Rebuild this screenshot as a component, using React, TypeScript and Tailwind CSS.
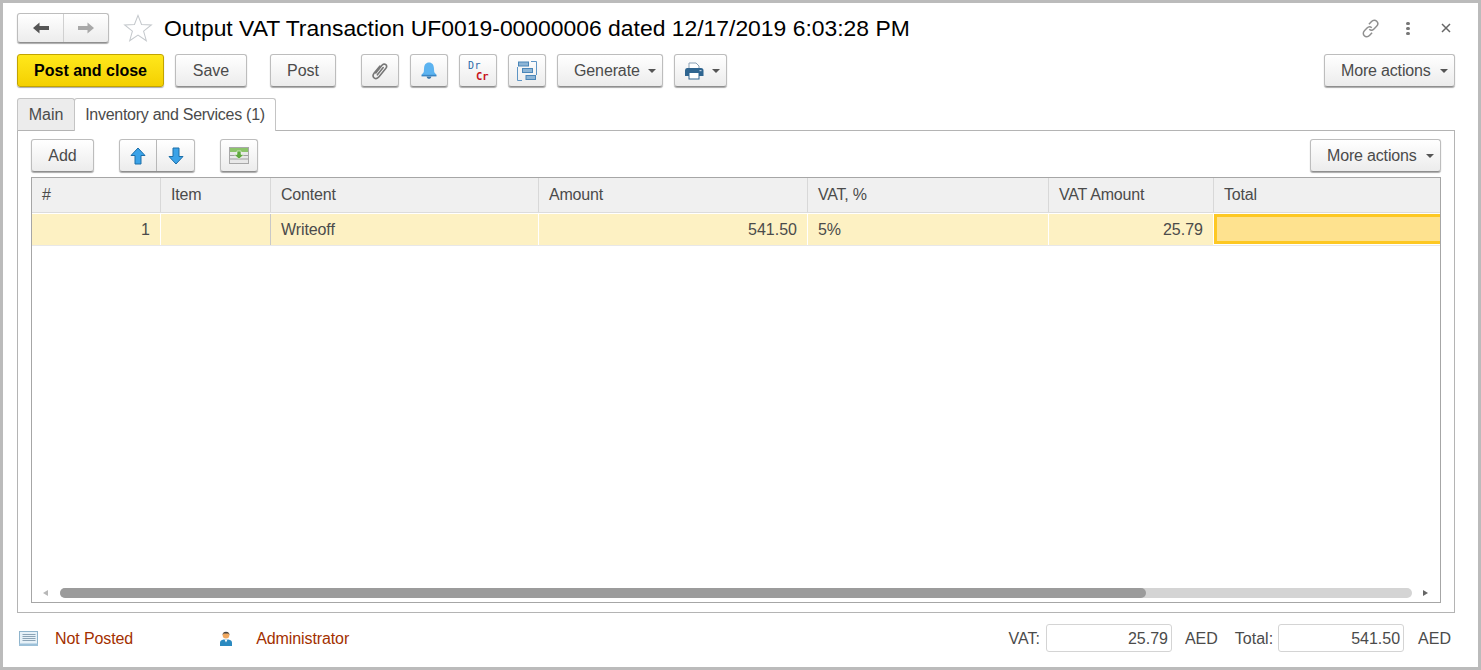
import React from "react";

const btn = "flex items-center justify-center h-[33px] rounded-[3px] border border-[#bdbdbd] border-b-[#8f8f8f] bg-gradient-to-b from-white to-[#ececec] shadow-[0_1px_1px_#aaa] text-[16px] text-[#4b4b4b]";
const drop = "flex items-center justify-start h-[33px] rounded-[3px] border border-[#bdbdbd] border-b-[#8f8f8f] bg-gradient-to-b from-white to-[#ececec] shadow-[0_1px_1px_#aaa] text-[16px] text-[#4b4b4b]";

const Caret = () => <span className="inline-block w-0 h-0 border-l-[4px] border-r-[4px] border-t-[4px] border-l-transparent border-r-transparent border-t-[#555]" />;

const Clip = () => (
  <svg width="18" height="18" viewBox="0 0 18 18" fill="none" stroke="#777" strokeWidth="1.6" strokeLinecap="round">
    <path d="M4.800 11 11 3.200c1.100-1.300 2.800-1.400 3.800-.5s1 2.500-.1 3.800L8 14.800c-1.500 1.800-3.600 2-4.900 1S1.900 12.800 3.200 11.100L8.800 4.200" />
    <path d="M6.400 12.800 12.200 5.600" />
  </svg>
);

const Bell = () => (
  <svg width="18" height="18" viewBox="0 0 18 18">
    <path d="M9 .6c3.200 0 4.700 2.300 4.900 5.200l.3 4c.1 1 1.500 1.900 2.300 3.200H1.500c.8-1.300 2.200-2.200 2.300-3.200l.3-4C4.300 2.900 5.800.6 9 .6z" fill="#5cb3f0" />
    <path d="M6.600 14.400h4.800c-.3 1.500-1.200 2.300-2.400 2.300s-2.100-.8-2.400-2.300z" fill="#3a76a8" />
    <rect x="1.500" y="12.800" width="15" height="1.600" fill="#3a86c4" />
  </svg>
);

const Flow = () => (
  <svg width="20" height="20" viewBox="0 0 20 20" fill="none">
    <path d="M.5 6v13.500H5M14 .5h5.500V14" stroke="#5f95c4" strokeWidth="1" />
    <rect x="1.500" y="1" width="10" height="4" fill="#8db5d6" stroke="#4a86b8" />
    <rect x="5.500" y="7.500" width="10" height="4" fill="#8db5d6" stroke="#4a86b8" />
    <rect x="9" y="14.500" width="9.500" height="4" fill="#8db5d6" stroke="#4a86b8" />
  </svg>
);

const Printer = () => (
  <svg width="20" height="18" viewBox="0 0 20 18">
    <path d="M5 1h7l3 3v4H5z" fill="#fff" stroke="#8aa0b4" />
    <path d="M3 6h14a2.500 2.500 0 0 1 2.500 2.500V14H1V8.500A2.500 2.500 0 0 1 3 6z" fill="#2f6590" />
    <rect x="5" y="10.500" width="10" height="6.500" fill="#fff" stroke="#2f6590" />
    <rect x="15.500" y="8" width="2" height="1.200" fill="#bcd" />
  </svg>
);

const Up = () => (
  <svg width="16" height="18" viewBox="0 0 16 18">
    <path d="M8 1 15 8.500H11V17H5V8.500H1z" fill="#3ba3e8" stroke="#1c6ea8" strokeLinejoin="round" />
  </svg>
);
const Down = () => (
  <svg width="16" height="18" viewBox="0 0 16 18">
    <path d="M8 17 15 9.500H11V1H5V9.500H1z" fill="#3ba3e8" stroke="#1c6ea8" strokeLinejoin="round" />
  </svg>
);

const Rows = () => (
  <svg width="20" height="17" viewBox="0 0 20 17">
    <rect x=".5" y=".5" width="19" height="16" fill="#e8e8e8" stroke="#a8a8a8" />
    <rect x="1" y="1" width="18" height="4" fill="#8cc46a" />
    <path d="M1 8.500h18M1 12h18" stroke="#a0a0a0" />
    <path d="M8 4h4v3.500h3L10 12 5 7.500h3z" fill="#5fa83e" stroke="#f0f8ea" strokeWidth=".6" />
  </svg>
);

const Star = () => (
  <svg width="30" height="28" viewBox="0 0 32 30" fill="none" stroke="#c4c8cc" strokeWidth="1.100">
    <path d="M16 1.500 19.800 11.300 30.300 11.700 22 18.300 24.900 28.600 16 22.700 7.100 28.600 10 18.300 1.700 11.700 12.200 11.300z" />
  </svg>
);

const Arrow = ({ right, color }: { right?: boolean; color: string }) => (
  <svg width="18" height="14" viewBox="0 0 18 14" style={{ transform: right ? "scaleX(-1)" : undefined }}>
    <path d="M1 7 7.500 1.500V5H17V9H7.500V12.500z" fill={color} />
  </svg>
);

const LinkIcon = () => (
  <svg width="21" height="21" viewBox="0 0 20 20" fill="none" stroke="#8f8f8f" strokeWidth="1.400">
    <path d="M8.500 6 11 3.300c1.400-1.500 3.600-1.500 4.900-.2s1.300 3.400-.1 4.800L13.300 10.500c-1.300 1.300-3.300 1.300-4.500.2" />
    <path d="M11.500 14 9 16.700c-1.400 1.500-3.600 1.500-4.900.2S2.800 13.500 4.200 12.100L6.700 9.500C8 8.200 10 8.200 11.200 9.300" />
  </svg>
);

const Memo = () => (
  <svg width="19" height="15" viewBox="0 0 19 15">
    <rect x=".5" y=".5" width="18" height="13.500" fill="#e6f1f8" stroke="#8fb4cc" />
    <rect x="0" y="12.500" width="19" height="2.500" fill="#9cc0d8" />
    <path d="M3.500 3.500h13M3.500 5.500h13M3.500 7.500h13M3.500 9.500h13" stroke="#8ba3b5" />
  </svg>
);

const Person = () => (
  <svg width="12" height="15" viewBox="0 0 12 15">
    <path d="M0 15v-3.500C0 9.800 1.500 9 3.500 8.500h5C10.500 9 12 9.800 12 11.500V15z" fill="#2b8ac0" />
    <path d="M4.500 8.500h3L6 11.500z" fill="#fff" />
    <circle cx="6" cy="4.200" r="3.300" fill="#f0a860" />
    <path d="M2.500 4.200a3.500 3.500 0 0 1 7 0L8.500 2.600h-5z" fill="#444" />
  </svg>
);

const cols = [
  { w: "w-[129px]", h: "#", v: "1", right: true, sep: "border-white" },
  { w: "w-[110px]", h: "Item", v: "", sep: "border-[#c8c8c8]" },
  { w: "w-[268px]", h: "Content", v: "Writeoff", sep: "border-white" },
  { w: "w-[269px]", h: "Amount", v: "541.50", right: true, sep: "border-white" },
  { w: "w-[241px]", h: "VAT, %", v: "5%", sep: "border-white" },
  { w: "w-[165px]", h: "VAT Amount", v: "25.79", right: true, sep: "border-white" },
];

export default function App() {
  return (
    <div className="w-[1481px] h-[670px] border-[3px] border-[#bbbbbb] bg-white text-[16px] text-[#4b4b4b] overflow-hidden" style={{ fontFamily: '"Liberation Sans", Arial, sans-serif' }}>
      <div className="flex items-center h-[30px] mt-[10px] ml-[14px] mr-[27px]">
        <div className="flex w-[92px] h-[30px] rounded-[3px] border border-[#bdbdbd] border-b-[#8f8f8f] bg-gradient-to-b from-white to-[#ececec] shadow-[0_1px_1px_#aaa]">
          <div className="w-[46px] flex items-center justify-center border-r border-[#d0d0d0]"><Arrow color="#555" /></div>
          <div className="flex-1 flex items-center justify-center"><Arrow right color="#a8a8a8" /></div>
        </div>
        <div className="ml-[14px] w-[30px]"><Star /></div>
        <div className="ml-[11px] text-[22.9px] text-black whitespace-nowrap">Output VAT Transaction UF0019-00000006 dated 12/17/2019 6:03:28 PM</div>
        <div className="ml-auto flex items-center">
          <LinkIcon />
          <div className="ml-[25px] flex flex-col gap-[2px] w-[4px] items-center">
            <span className="w-[4px] h-[3px] rounded-full bg-[#777]" />
            <span className="w-[4px] h-[3px] rounded-full bg-[#777]" />
            <span className="w-[4px] h-[3px] rounded-full bg-[#777]" />
          </div>
          <svg className="ml-[31px]" width="10" height="10" viewBox="0 0 10 10" stroke="#666" strokeWidth="1.500"><path d="M1 1 9 9M9 1 1 9" /></svg>
        </div>
      </div>

      <div className="flex mt-[11px] ml-[14px] mr-[23px] h-[34px]">
        <div className="w-[147px] h-[33px] flex items-center justify-center rounded-[3px] border border-[#c2a400] bg-gradient-to-b from-[#ffe81a] to-[#f4d000] shadow-[0_1px_1px_#aaa] font-bold text-black text-[16px]">Post and close</div>
        <div className={`${btn} w-[72px] ml-[11px]`}>Save</div>
        <div className={`${btn} w-[66px] ml-[23px]`}>Post</div>
        <div className={`${btn} w-[38px] ml-[25px]`}><Clip /></div>
        <div className={`${btn} w-[38px] ml-[11px]`}><Bell /></div>
        <div className={`${btn} w-[38px] ml-[11px] relative`}>
          <span className="absolute left-[8px] top-[5px] text-[10px] leading-[12px] tracking-[0.6px] text-[#2a6aa8]" style={{ fontFamily: '"DejaVu Sans Mono", monospace' }}>Dr</span>
          <span className="absolute left-[16px] top-[15px] text-[10.5px] leading-[13px] font-bold text-[#c8141c]" style={{ fontFamily: '"DejaVu Sans Mono", monospace' }}>Cr</span>
        </div>
        <div className={`${btn} w-[38px] ml-[11px]`}><Flow /></div>
        <div className={`${drop} w-[106px] ml-[11px] gap-[8px] pl-[16px]`}><span className="tracking-[-0.12px]">Generate</span><Caret /></div>
        <div className={`${drop} w-[53px] ml-[11px] gap-[8px] pl-[9px]`}><Printer /><Caret /></div>
        <div className={`${drop} w-[131px] ml-auto gap-[9px] pl-[16px]`}><span className="tracking-[-0.17px]">More actions</span><Caret /></div>
      </div>

      <div className="flex mt-[10px] ml-[14px] h-[33px] relative z-10">
        <div className="w-[58px] h-[33px] flex items-center justify-center bg-[#ececec] border border-[#c4c4c4] border-b-[#b4b4b4] rounded-t-[3px]">Main</div>
        <div className="w-[202px] h-[33px] flex items-center justify-center bg-white border border-[#c4c4c4] border-b-0 rounded-t-[3px] -ml-px tracking-[-0.27px]">Inventory and Services (1)</div>
      </div>

      <div className="ml-[14px] mr-[23px] -mt-px h-[483px] border border-[#b4b4b4] px-[13px] pt-[8px]">
        <div className="flex h-[34px]">
          <div className={`${btn} w-[63px]`}>Add</div>
          <div className="flex ml-[25px] w-[76px] h-[33px] rounded-[3px] border border-[#bdbdbd] border-b-[#8f8f8f] bg-gradient-to-b from-white to-[#ececec] shadow-[0_1px_1px_#aaa]">
            <div className="w-[37px] flex items-center justify-center border-r border-[#b8b8b8]"><Up /></div>
            <div className="flex-1 flex items-center justify-center"><Down /></div>
          </div>
          <div className={`${btn} w-[38px] ml-[25px]`}><Rows /></div>
          <div className={`${drop} w-[131px] ml-auto gap-[9px] pl-[16px]`}><span className="tracking-[-0.17px]">More actions</span><Caret /></div>
        </div>

        <div className="mt-[4px] w-[1410px] h-[426px] border border-[#a6a6a6] flex flex-col">
          <div className="flex h-[35px] bg-[#f0f0f0] border-b border-[#dcdcdc]">
            {cols.map((c) => (
              <div key={c.h} className={`${c.w} h-full flex items-center pl-[10px] border-r border-[#d8d8d8] tracking-[-0.2px]`}>{c.h}</div>
            ))}
            <div className="flex-1 flex items-center pl-[10px] tracking-[-0.2px]">Total</div>
          </div>
          <div className="flex h-[33px] bg-[#fdf1c3] border-t border-t-white border-b border-b-[#e8e8e8]">
            {cols.map((c) => (
              <div key={c.h} className={`${c.w} h-full flex items-center px-[10px] border-r ${c.sep} ${c.right ? "justify-end" : "tracking-[-0.1px]"}`}>{c.v}</div>
            ))}
            <div className="flex-1 h-full bg-white">
              <div className="h-[30px] border-y-[3px] border-l-[3px] border-[#fdc823] bg-[#fee28f]" />
            </div>
          </div>
          <div className="flex-1" />
          <div className="flex items-center h-[10px] mb-[4px]">
            <span className="ml-[11px] w-0 h-0 border-y-[3px] border-r-[5px] border-y-transparent border-r-[#b8b8b8]" />
            <div className="ml-[12px] w-[1352px] h-[10px] rounded-full bg-[#d4d4d4]">
              <div className="w-[1086px] h-[10px] rounded-full bg-[#9b9b9b]" />
            </div>
            <span className="ml-[11px] w-0 h-0 border-y-[3px] border-l-[5px] border-y-transparent border-l-[#666]" />
          </div>
        </div>
      </div>

      <div className="flex items-center h-[26px] mt-[12px] ml-[16px] mr-[27px]">
        <Memo />
        <span className="ml-[17px] pt-[2px] text-[#a33000] tracking-[-0.1px]">Not Posted</span>
        <span className="ml-[87px]"><Person /></span>
        <span className="ml-[24px] pt-[2px] text-[#a33000] tracking-[-0.1px]">Administrator</span>
        <span className="ml-auto pt-[2px]">VAT:</span>
        <div className="ml-[6px] w-[126px] h-[28px] flex items-center justify-end pr-[3px] pt-[2px] rounded-[3px] border border-[#d4d4d4]">25.79</div>
        <span className="ml-[13px] pt-[2px]">AED</span>
        <span className="ml-[17px] pt-[2px]">Total:</span>
        <div className="ml-[5px] w-[126px] h-[28px] flex items-center justify-end pr-[3px] pt-[2px] rounded-[3px] border border-[#d4d4d4]">541.50</div>
        <span className="ml-[14px] pt-[2px]">AED</span>
      </div>
    </div>
  );
}
